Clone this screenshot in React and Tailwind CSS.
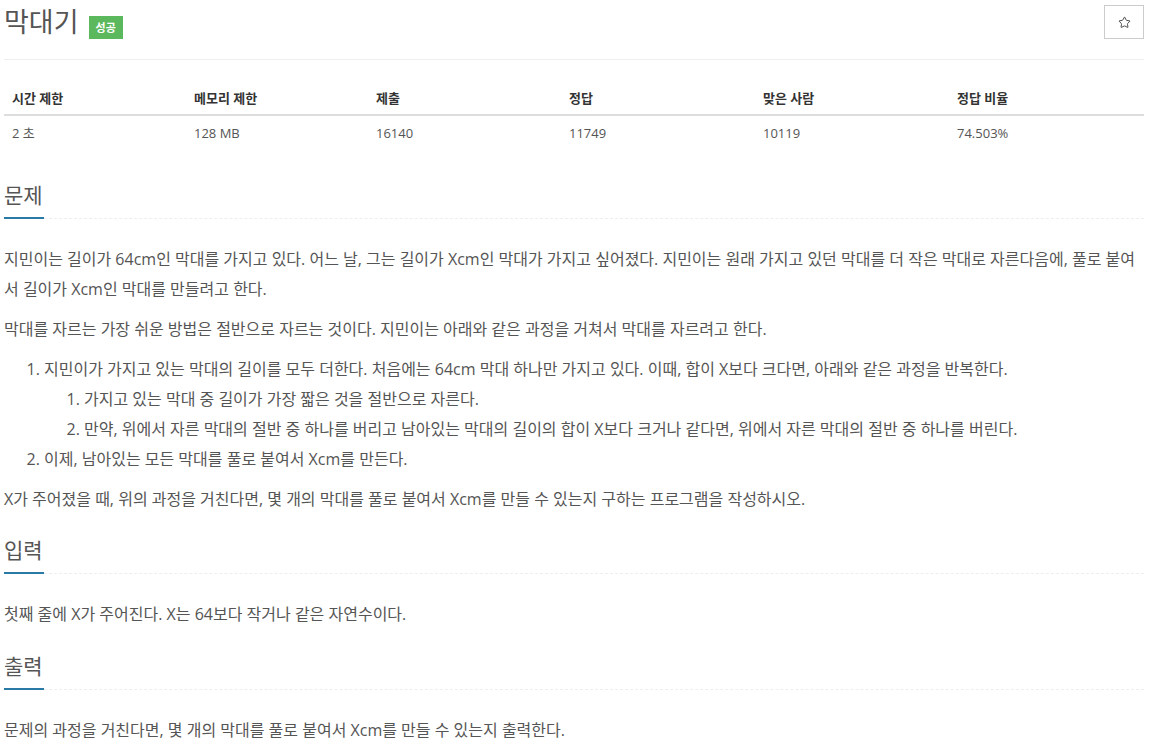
import { Star } from 'lucide-react';

const FONT = { fontFamily: '"Open Sans", "Noto Sans CJK KR", sans-serif' };

const STATS = [
  { label: '시간 제한', value: '2 초', w: 'w-[182px]' },
  { label: '메모리 제한', value: '128 MB', w: 'w-[182px]' },
  { label: '제출', value: '16140', w: 'w-[193px]' },
  { label: '정답', value: '11749', w: 'w-[194px]' },
  { label: '맞은 사람', value: '10119', w: 'w-[194px]' },
  { label: '정답 비율', value: '74.503%', w: '' },
];

function SectionTitle({ children }) {
  return (
    <div className="border-b border-dashed border-[#eee] mb-[25px]">
      <h2 className="inline-block text-[21px] leading-[30px] text-[#555] border-b-2 border-[#2a7aa8] pb-[7px] -mb-px pr-[1px]">
        {children}
      </h2>
    </div>
  );
}

export default function App() {
  return (
    <div className="w-[1150px] bg-white pl-[4px] pr-[6px] pt-[4px] text-[#555]" style={FONT}>
      {/* Title */}
      <div className="flex items-start justify-between pb-[19px] border-b border-[#eee]">
        <div className="flex items-center gap-[10px]">
          <h1 className="text-[27px] leading-[36px] text-[#555]">막대기</h1>
          <span className="mt-[10px] bg-[#5cb85c] text-white text-[11px] font-bold px-[7px] leading-[23px]">
            성공
          </span>
        </div>
        <button className="mt-[1px] w-[40px] h-[34px] border border-[#ccc] flex items-center justify-center">
          <Star size={13} strokeWidth={1.6} className="text-[#333]" />
        </button>
      </div>

      {/* Stats table */}
      <div className="mt-[24px] text-[13px]">
        <div className="flex border-b-2 border-[#ddd] h-[32px] items-center font-bold text-[#333]">
          {STATS.map((s) => (
            <div key={s.label} className={`${s.w} pl-[8px]`}>
              {s.label}
            </div>
          ))}
        </div>
        <div className="flex h-[36px] items-center">
          {STATS.map((s) => (
            <div key={s.label} className={`${s.w} pl-[8px]`}>
              {s.value}
            </div>
          ))}
        </div>
      </div>

      <div className="text-[16px] leading-[30px]">
        {/* 문제 */}
        <section className="mt-[28px]">
          <SectionTitle>문제</SectionTitle>
          <p className="mb-[10px]">
            지민이는 길이가 64cm인 막대를 가지고 있다. 어느 날, 그는 길이가 Xcm인 막대가 가지고 싶어졌다. 지민이는 원래 가지고 있던 막대를 더 작은 막대로 자른다음에, 풀로 붙여서 길이가 Xcm인 막대를 만들려고 한다.
          </p>
          <p className="mb-[10px]">
            막대를 자르는 가장 쉬운 방법은 절반으로 자르는 것이다. 지민이는 아래와 같은 과정을 거쳐서 막대를 자르려고 한다.
          </p>
          <ol className="list-decimal pl-[40px] mb-[10px]">
            <li>
              지민이가 가지고 있는 막대의 길이를 모두 더한다. 처음에는 64cm 막대 하나만 가지고 있다. 이때, 합이 X보다 크다면, 아래와 같은 과정을 반복한다.
              <ol className="list-decimal pl-[40px]">
                <li>가지고 있는 막대 중 길이가 가장 짧은 것을 절반으로 자른다.</li>
                <li>만약, 위에서 자른 막대의 절반 중 하나를 버리고 남아있는 막대의 길이의 합이 X보다 크거나 같다면, 위에서 자른 막대의 절반 중 하나를 버린다.</li>
              </ol>
            </li>
            <li>이제, 남아있는 모든 막대를 풀로 붙여서 Xcm를 만든다.</li>
          </ol>
          <p className="mb-[10px]">
            X가 주어졌을 때, 위의 과정을 거친다면, 몇 개의 막대를 풀로 붙여서 Xcm를 만들 수 있는지 구하는 프로그램을 작성하시오.
          </p>
        </section>

        {/* 입력 */}
        <section className="mt-[21px]">
          <SectionTitle>입력</SectionTitle>
          <p className="mb-[10px]">첫째 줄에 X가 주어진다. X는 64보다 작거나 같은 자연수이다.</p>
        </section>

        {/* 출력 */}
        <section className="mt-[22px]">
          <SectionTitle>출력</SectionTitle>
          <p className="mb-[10px]">문제의 과정을 거친다면, 몇 개의 막대를 풀로 붙여서 Xcm를 만들 수 있는지 출력한다.</p>
        </section>
      </div>
    </div>
  );
}
